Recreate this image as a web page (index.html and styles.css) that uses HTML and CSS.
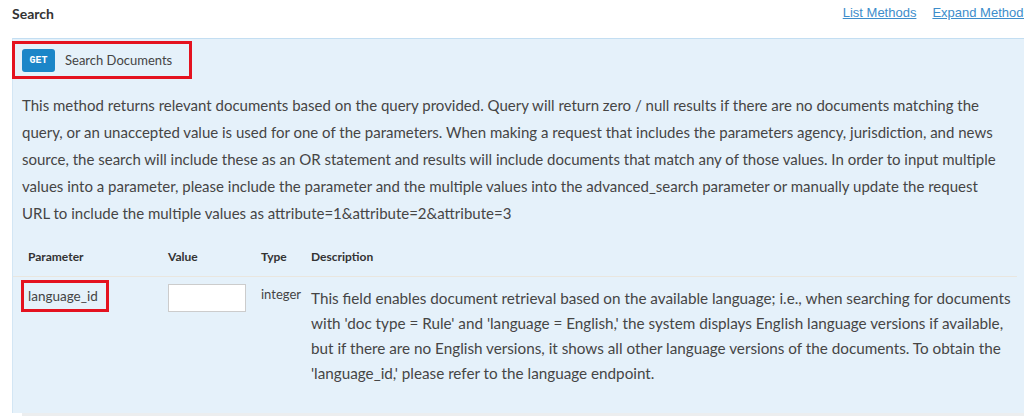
FILE: index.html
```html
<!DOCTYPE html>
<html lang="en">
<head>
    <meta charset="UTF-8">
    <meta name="viewport" content="width=device-width, initial-scale=1.0">
    <title>Search - API Methods</title>
    <link rel="stylesheet" href="styles.css">
</head>
<body>
    <div class="page">
        <div class="resource-head">
            <h2>Search</h2>
            <ul class="resource-links">
                <li><a href="#">List Methods</a></li>
                <li><a href="#">Expand Methods</a></li>
            </ul>
        </div>

        <div class="method">
            <div class="method-title highlight">
                <span class="verb">GET</span>
                <span class="method-name">Search Documents</span>
            </div>

            <p class="method-desc">This method returns relevant documents based on the query provided. Query will return zero / null results if there are no documents matching the query, or an unaccepted value is used for one of the parameters. When making a request that includes the parameters agency, jurisdiction, and news source, the search will include these as an OR statement and results will include documents that match any of those values. In order to input multiple values into a parameter, please include the parameter and the multiple values into the advanced_search parameter or manually update the request URL to include the multiple values as attribute=1&amp;attribute=2&amp;attribute=3</p>

            <table class="params">
                <thead>
                    <tr>
                        <th class="col-name">Parameter</th>
                        <th class="col-value">Value</th>
                        <th class="col-type">Type</th>
                        <th class="col-desc">Description</th>
                    </tr>
                </thead>
                <tbody>
                    <tr>
                        <td class="col-name"><span class="param-name highlight">language_id</span></td>
                        <td class="col-value"><input type="text" class="param-input"></td>
                        <td class="col-type">integer</td>
                        <td class="col-desc">This field enables document retrieval based on the available language; i.e., when searching for documents with 'doc type = Rule' and 'language = English,' the system displays English language versions if available, but if there are no English versions, it shows all other language versions of the documents. To obtain the 'language_id,' please refer to the language endpoint.</td>
                    </tr>
                </tbody>
            </table>
        </div>
        <div class="next-method"></div>
    </div>
</body>
</html>
```

FILE: styles.css
```css
html, body {
    margin: 0;
    padding: 0;
    overflow: hidden;
}

body {
    font-family: Lato, "Open Sans", sans-serif;
    color: #444;
    background: #fff;
}

.page {
    width: 1018px;
    padding-left: 12px;
}

.resource-head {
    display: flex;
    justify-content: space-between;
    align-items: flex-start;
    height: 38px;
}

.resource-head h2 {
    margin: 5px 0 0 0;
    font-size: 14px;
    font-weight: bold;
    color: #333;
}

.resource-links {
    list-style: none;
    margin: 1px 0 0 0;
    padding: 0;
    display: flex;
    gap: 16px;
}

.resource-links a {
    font-family: "Liberation Sans", Arial, sans-serif;
    font-size: 13px;
    color: #3d8dcb;
    text-decoration: underline;
}

.method {
    background: #e5f1fa;
    border-top: 1px solid #c3def2;
    border-left: 1px solid #d3e6f4;
    height: 375px;
    box-sizing: border-box;
    padding-top: 2px;
}

.highlight {
    border: 3px solid #e4121f;
}

.method-title {
    display: inline-flex;
    align-items: center;
    width: 180px;
    height: 38px;
    box-sizing: border-box;
    padding-left: 7px;
    margin-left: -1px;
}

.verb {
    display: inline-block;
    background: #1b86c8;
    color: #fff;
    font-family: "Liberation Mono", monospace;
    font-weight: bold;
    font-size: 10px;
    width: 33px;
    height: 23px;
    line-height: 23px;
    text-align: center;
    border-radius: 3px;
}

.method-name {
    font-size: 13px;
    color: #444;
    margin-left: 10px;
}

.method-desc {
    margin: 13px 0 0 9px;
    width: 985px;
    font-size: 15px;
    line-height: 27px;
    color: #454545;
}

.params {
    border-collapse: collapse;
    table-layout: fixed;
    width: 1004px;
    margin-top: 22px;
}

.params th,
.params td {
    box-sizing: border-box;
}

.params th {
    text-align: left;
    font-size: 12px;
    font-weight: bold;
    color: #333;
    padding: 0 8px 12px 8px;
    border-bottom: 1px solid #e9e6df;
}

.params td {
    vertical-align: top;
    padding: 5px 8px 0 8px;
}

.params .col-name {
    width: 147px;
    padding-left: 15px;
}

.params .col-value {
    width: 93px;
}

.params .col-type {
    width: 50px;
}

.params td.col-type {
    font-size: 13px;
    padding-top: 9px;
}

.params td.col-desc {
    font-size: 15.25px;
    line-height: 25px;
    padding-top: 9px;
    padding-right: 2px;
    color: #454545;
}

.param-name {
    display: inline-block;
    font-size: 13.5px;
    padding: 5px 8px 5px 4px;
    margin-left: -7px;
    margin-top: -2px;
    color: #444;
}

.param-input {
    width: 78px;
    height: 28px;
    box-sizing: border-box;
    border: 1px solid #ccc;
    margin-top: 2px;
}

.next-method {
    height: 10px;
    margin-left: 10px;
    background: #eceeef;
}
```
